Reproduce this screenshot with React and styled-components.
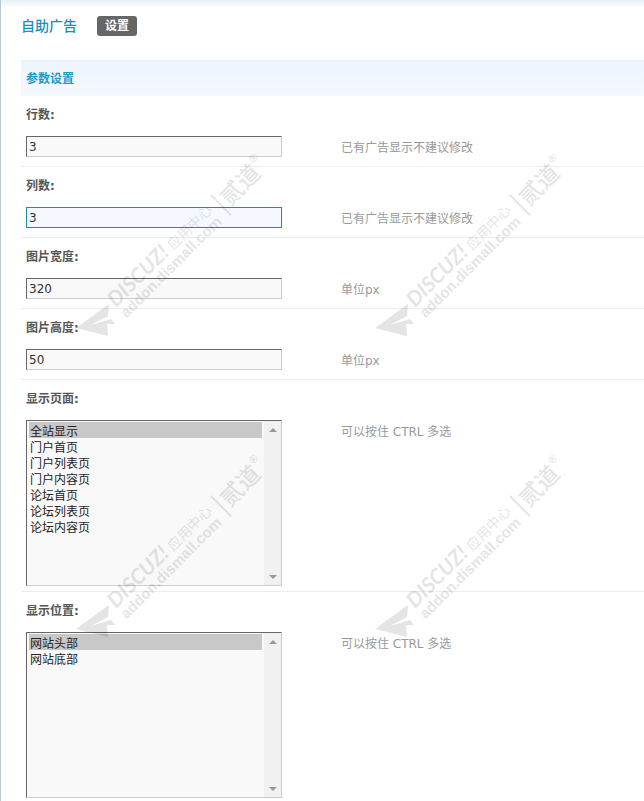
import React, { useId } from 'react';
import styled, { createGlobalStyle } from 'styled-components';

const GlobalStyle = createGlobalStyle`
  * {
    box-sizing: border-box;
  }

  body {
    margin: 0;
    background: #fff;
    color: #555;
    font: 12px/16px 'DejaVu Sans', 'Noto Sans CJK SC', sans-serif;
  }
`;

const StyledPage = styled.main`
  position: relative;
  min-height: 100vh;
  padding: 16px 0 3px 20px;
  overflow: hidden;
  border-left: 1px solid #b5c9d3;
  background: linear-gradient(#e3f1f6, #fff 7px) no-repeat;
`;

const StyledHeader = styled.header`
  display: flex;
  align-items: center;
  gap: 20px;
  height: 20px;
  margin-bottom: 24px;

  h1 {
    margin: 0;
    color: #1590bd;
    font-size: 14px;
    font-weight: 500;
  }
`;

const StyledTab = styled.a`
  padding: 2px 8px;
  border-radius: 3px;
  background: #666;
  color: #fff;
  font-weight: 700;
  text-decoration: none;
`;

const StyledSectionTitle = styled.h2`
  height: 36px;
  margin: 0;
  padding: 0 5px;
  border-top: 1px solid #e8f1f8;
  background: linear-gradient(#edf4fe, #f4f9fd);
  color: #1a9bc4;
  font-size: 12px;
  line-height: 36px;
`;

const StyledRow = styled.div`
  display: grid;
  grid-template-columns: 315px 1fr;
  border-bottom: 1px solid #e6eff5;
  padding: 0 5px ${({ $tall }) => ($tall ? 5 : 9)}px;

  label {
    grid-column: 1 / -1;
    height: 40px;
    color: #555;
    font-weight: 700;
    line-height: 38px;
  }
`;

const StyledHint = styled.span`
  padding-top: 4px;
  color: #999;
`;

const StyledInput = styled.input`
  width: 256px;
  height: 21px;
  padding: 0 2px;
  border: 1px solid;
  border-color: ${({ $active }) => ($active ? '#1a8cae' : '#666 #ccc #ccc #666')};
  border-radius: 0;
  outline: none;
  background: ${({ $active }) => ($active ? '#f5f9ff' : '#f9f9f9')};
  color: #333;
  font: inherit;
`;

const StyledList = styled.div`
  display: flex;
  width: 256px;
  height: 166px;
  border: 1px solid;
  border-color: #666 #ccc #ccc #666;
  background: #f9f9f9;

  select {
    flex: 1;
    padding: 1px 2px;
    overflow: hidden;
    border: 0;
    outline: none;
    background: transparent;
    color: #222;
    font: inherit;
  }

  option {
    height: 16px;
    min-height: 16px;
    padding: 0 1px;
    line-height: 16px;
  }

  option:checked {
    background: #c8c8c8 linear-gradient(#c8c8c8, #c8c8c8);
    color: #222;
  }
`;

const StyledScroll = styled.div`
  display: flex;
  flex-direction: column;
  justify-content: space-between;
  width: 17px;
  background: #f1f1f1;

  button {
    display: grid;
    place-items: center;
    height: 17px;
    padding: 0;
    border: 0;
    background: none;
  }
`;

const StyledWatermark = styled.svg`
  position: absolute;
  top: 0;
  left: 0;
  width: 100%;
  height: 100%;
  pointer-events: none;
`;

const fields = [
  { label: '行数:', value: '3', hint: '已有广告显示不建议修改' },
  { label: '列数:', value: '3', hint: '已有广告显示不建议修改', active: true },
  { label: '图片宽度:', value: '320', hint: '单位px' },
  { label: '图片高度:', value: '50', hint: '单位px' },
];

const lists = [
  {
    label: '显示页面:',
    hint: '可以按住 CTRL 多选',
    options: ['全站显示', '门户首页', '门户列表页', '门户内容页', '论坛首页', '论坛列表页', '论坛内容页'],
  },
  { label: '显示位置:', hint: '可以按住 CTRL 多选', options: ['网站头部', '网站底部'] },
];

const marks = [
  { x: 75, y: 328 },
  { x: 374, y: 328 },
  { x: 75, y: 629 },
  { x: 374, y: 629 },
];

const TextRow = ({ label, value, hint, active }) => {
  const id = useId();

  return (
    <StyledRow>
      <label htmlFor={id}>{label}</label>
      <StyledInput id={id} type="text" defaultValue={value} $active={active} />
      <StyledHint>{hint}</StyledHint>
    </StyledRow>
  );
};

const ListRow = ({ label, options, hint }) => {
  const id = useId();

  return (
    <StyledRow $tall>
      <label htmlFor={id}>{label}</label>
      <StyledList>
        <select id={id} multiple size={10} defaultValue={[options[0]]}>
          {options.map(option => (
            <option key={option}>{option}</option>
          ))}
        </select>
        <StyledScroll>
          <button type="button" aria-label="Scroll up">
            <svg width="8" height="4" fill="#999">
              <path d="M0 4 4 0 8 4z" />
            </svg>
          </button>
          <button type="button" aria-label="Scroll down">
            <svg width="8" height="4" fill="#999">
              <path d="M0 0 4 4 8 0z" />
            </svg>
          </button>
        </StyledScroll>
      </StyledList>
      <StyledHint>{hint}</StyledHint>
    </StyledRow>
  );
};

// The logo reads uphill at 45deg, starting from the nose of the paper plane
const Watermark = () => (
  <StyledWatermark aria-hidden="true">
    {marks.map(({ x, y }) => (
      <g key={`${x}-${y}`} transform={`translate(${x} ${y})`} fill="#000" opacity="0.1">
        <path d="M0 0 33-24 32-12 15-3 35-9 39-4 31-4 32 8z" />
        <g transform="translate(40 -20) rotate(-45)">
          <text fontFamily="Lato" fontSize="21" fontStyle="italic" fontWeight="700">DISCUZ!</text>
          <text x="81" fontFamily="Noto Sans CJK SC" fontSize="14">应用中心</text>
          <text y="15" fontFamily="Liberation Sans" fontSize="15" fontWeight="700">addon.dismall.com</text>
          <path d="M146-13h2v29h-2z" />
          <text x="152" y="9" fontFamily="Noto Sans CJK SC" fontSize="23" fontWeight="500">贰道</text>
          <text x="199" y="-5" fontFamily="Liberation Sans" fontSize="11" fontWeight="700">®</text>
        </g>
      </g>
    ))}
  </StyledWatermark>
);

const App = () => (
  <>
    <GlobalStyle />
    <StyledPage>
      <StyledHeader>
        <h1>自助广告</h1>
        <StyledTab href="#settings">设置</StyledTab>
      </StyledHeader>
      <form id="settings">
        <StyledSectionTitle>参数设置</StyledSectionTitle>
        {fields.map(field => (
          <TextRow key={field.label} {...field} />
        ))}
        {lists.map(list => (
          <ListRow key={list.label} {...list} />
        ))}
      </form>
      <Watermark />
    </StyledPage>
  </>
);

export default App;
